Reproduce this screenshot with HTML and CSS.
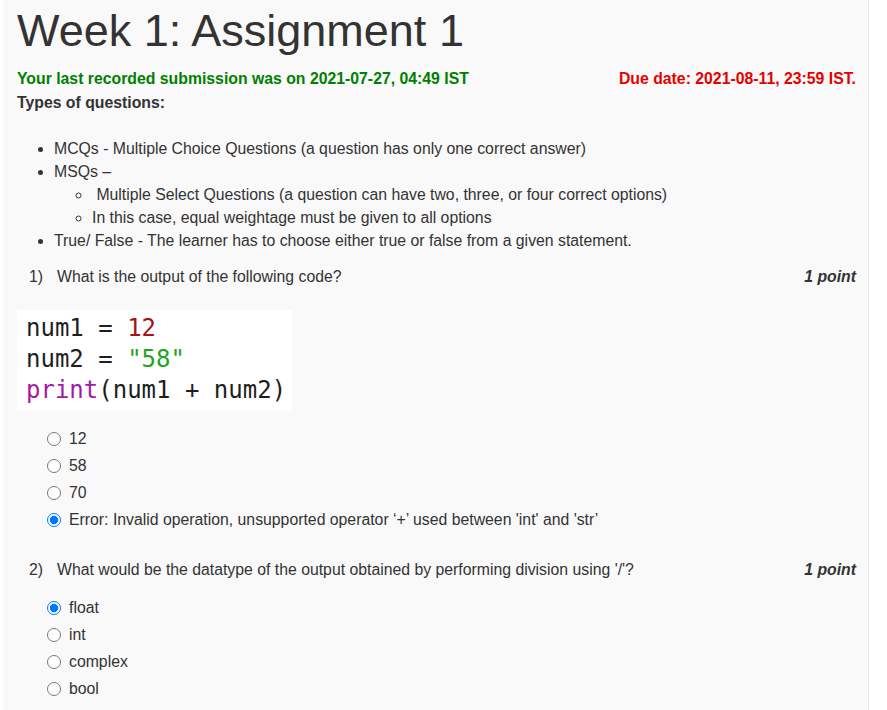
FILE: index.html
```html
<!DOCTYPE html>
<html lang="en">
<head>
<meta charset="utf-8">
<title>Week 1: Assignment 1</title>
<link rel="stylesheet" href="styles.css">
</head>
<body>
<div class="page">
  <h1 class="title">Week 1: Assignment 1</h1>
  <div class="status">
    <span class="submitted">Your last recorded submission was on 2021-07-27, 04:49 IST</span>
    <span class="due">Due date: 2021-08-11, 23:59 IST.</span>
  </div>
  <div class="types">Types of questions:</div>
  <ul class="qtypes">
    <li>MCQs - Multiple Choice Questions (a question has only one correct answer)</li>
    <li>MSQs –
      <ul class="sub">
        <li>&nbsp;Multiple Select Questions (a question can have two, three, or four correct options)</li>
        <li>In this case, equal weightage must be given to all options</li>
      </ul>
    </li>
    <li>True/ False - The learner has to choose either true or false from a given statement.</li>
  </ul>

  <div class="question q1">
    <div class="qhead">
      <span class="qnum">1)</span>
      <span class="qtext">What is the output of the following code?</span>
      <span class="points">1 point</span>
    </div>
    <div class="code"><div>num1 = <span class="num">12</span></div><div>num2 = <span class="str">"58"</span></div><div><span class="kw">print</span>(num1 + num2)</div></div>
    <div class="options">
      <label class="option"><input type="radio" name="q1"><span>12</span></label>
      <label class="option"><input type="radio" name="q1"><span>58</span></label>
      <label class="option"><input type="radio" name="q1"><span>70</span></label>
      <label class="option"><input type="radio" name="q1" checked><span>Error: Invalid operation, unsupported operator ‘+’ used between 'int' and 'str’</span></label>
    </div>
  </div>

  <div class="question q2">
    <div class="qhead">
      <span class="qnum">2)</span>
      <span class="qtext">What would be the datatype of the output obtained by performing division using '/'?</span>
      <span class="points">1 point</span>
    </div>
    <div class="options">
      <label class="option"><input type="radio" name="q2" checked><span>float</span></label>
      <label class="option"><input type="radio" name="q2"><span>int</span></label>
      <label class="option"><input type="radio" name="q2"><span>complex</span></label>
      <label class="option"><input type="radio" name="q2"><span>bool</span></label>
    </div>
  </div>
</div>
</body>
</html>
```
FILE: styles.css
```css
* { box-sizing: border-box; }
html, body { margin: 0; padding: 0; background: #ffffff; }
body {
  font-family: "Liberation Sans", Arial, sans-serif;
  color: #333333;
  font-size: 15.8px;
}
.page {
  margin-left: 3px;
  width: 866px;
  min-height: 710px;
  background: #f9f9f9;
  border-right: 1px solid #ececec;
  padding: 6px 12px 0 14px;
}
.title {
  margin: 0;
  font-size: 45px;
  font-weight: normal;
  line-height: 50px;
  color: #333333;
}
.status {
  margin-top: 10.5px;
  display: flex;
  justify-content: space-between;
  font-weight: bold;
  line-height: 24px;
}
.submitted { color: #008000; }
.due { color: #e60000; }
.types {
  font-weight: bold;
  line-height: 24px;
  color: #333333;
}
.qtypes {
  margin: 22px 0 0 0;
  padding-left: 37px;
  line-height: 23px;
}
.qtypes .sub {
  margin: 0;
  padding-left: 38px;
  list-style-type: circle;
}
.q1 { margin-top: 13px; }
.q2 { margin-top: 24px; }
.qhead {
  display: flex;
  line-height: 23px;
  padding-left: 12px;
}
.qnum { width: 28px; flex: none; }
.qtext { flex: 1; }
.points {
  font-weight: bold;
  font-style: italic;
}
.code {
  margin-top: 22.5px;
  width: 275px;
  background: #ffffff;
  padding: 3px 0 5px 9px;
  font-family: "DejaVu Sans Mono", monospace;
  font-size: 24px;
  line-height: 31px;
  color: #1e1e1e;
}
.code .num { color: #a31515; }
.code .str { color: #21a621; }
.code .kw { color: #a31aa3; }
.options {
  margin-left: 30px;
  margin-top: 14.5px;
}
.q2 .options { margin-top: 14px; }
.option {
  display: flex;
  align-items: center;
  height: 27px;
}
.option input {
  margin: 0 8px 0 0;
  width: 14px;
  height: 14px;
  flex: none;
}
```
